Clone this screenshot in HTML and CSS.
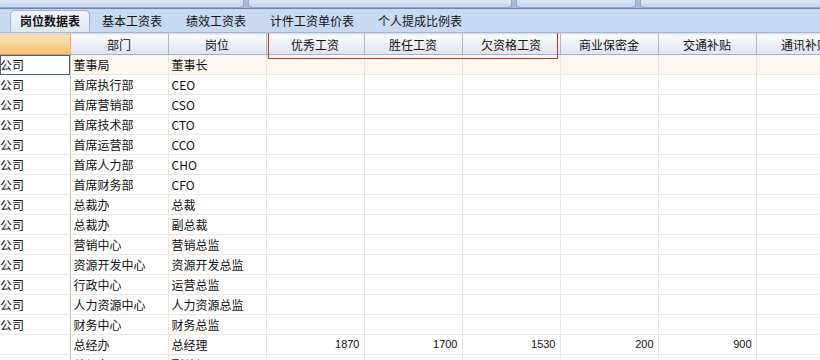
FILE: index.html
```html
<!DOCTYPE html>
<html lang="zh-CN">
<head>
  <meta charset="UTF-8" />
  <title>岗位数据表</title>
  <link rel="stylesheet" href="styles.css">
</head>
<body>
  <div class="topbar">
    <div class="topbtn w1"></div>
    <div class="topbtn w2"></div>
    <div class="topbtn w3"></div>
    <div class="topbtn w4"></div>
  </div>

  <div class="tabbar">
    <div class="tab active">岗位数据表</div>
    <div class="tab">基本工资表</div>
    <div class="tab">绩效工资表</div>
    <div class="tab">计件工资单价表</div>
    <div class="tab">个人提成比例表</div>
  </div>

  <div class="sheet">
    <table class="grid">
      <colgroup>
        <col class="c0"><col class="cw"><col class="cw"><col class="cw"><col class="cw">
        <col class="cw"><col class="cw"><col class="cw"><col class="cw">
      </colgroup>
      <thead>
        <tr>
          <th class="corner"></th>
          <th>部门</th><th>岗位</th><th>优秀工资</th><th>胜任工资</th>
          <th>欠资格工资</th><th>商业保密金</th><th>交通补贴</th><th>通讯补贴</th>
        </tr>
      </thead>
      <tbody id="rows"></tbody>
    </table>
    <div class="mark"></div>
  </div>

  <script>
    const rows = [
      ["公司", "董事局", "董事长"],
      ["公司", "首席执行部", "CEO"],
      ["公司", "首席营销部", "CSO"],
      ["公司", "首席技术部", "CTO"],
      ["公司", "首席运营部", "CCO"],
      ["公司", "首席人力部", "CHO"],
      ["公司", "首席财务部", "CFO"],
      ["公司", "总裁办", "总裁"],
      ["公司", "总裁办", "副总裁"],
      ["公司", "营销中心", "营销总监"],
      ["公司", "资源开发中心", "资源开发总监"],
      ["公司", "行政中心", "运营总监"],
      ["公司", "人力资源中心", "人力资源总监"],
      ["公司", "财务中心", "财务总监"],
      ["", "总经办", "总经理", "1870", "1700", "1530", "200", "900"],
      ["", "总经办", "副总经理"]
    ];

    let html = "";
    rows.forEach((r, i) => {
      html += `<tr class="${i === 0 ? "current" : ""}">`;
      for (let c = 0; c < 9; c++) {
        const v = r[c] || "";
        const cls = c === 0 ? "lead" : (c > 2 ? "num" : "");
        html += `<td class="${cls}">${v}</td>`;
      }
      html += "</tr>";
    });
    document.getElementById("rows").innerHTML = html;
  </script>
</body>
</html>
```

FILE: styles.css
```css
body {
  margin: 0;
  width: 820px;
  height: 360px;
  overflow: hidden;
  font-family: "Noto Sans CJK SC", sans-serif;
  font-size: 12px;
  color: #111;
  background: #fff;
}

.topbar {
  display: flex;
  gap: 4px;
  height: 8px;
  background: #a9bad4;
  border-bottom: 1px solid #6f84a8;
  overflow: hidden;
}

.topbtn {
  height: 7px;
  background: linear-gradient(#dbe6f5, #c6d6ee);
  border: 1px solid #93a8ca;
  border-top: none;
  border-radius: 0 0 4px 4px;
}

.w1 { width: 244px; margin-left: -2px; }
.w2 { width: 262px; }
.w3 { width: 118px; }
.w4 { flex: 1; margin-right: -2px; }

.tabbar {
  display: flex;
  align-items: flex-end;
  height: 23px;
  padding-left: 10px;
  background: #c8d9f2;
  border-bottom: 1px solid #a4b6d2;
}

.tab {
  height: 21px;
  line-height: 20px;
  padding: 0 12px;
}

.tab.active {
  padding: 0 9px;
  font-weight: bold;
  background: linear-gradient(#f1f5fb, #dde7f5);
  border: 1px solid #9db0cf;
  border-bottom: none;
  border-radius: 5px 5px 0 0;
}

.sheet {
  position: relative;
  overflow: hidden;
}

.grid {
  table-layout: fixed;
  width: 854px;
  border-collapse: collapse;
}

.c0 { width: 70px; }
.cw { width: 98px; }

th {
  height: 20px;
  padding: 0;
  font-weight: normal;
  line-height: 19px;
  text-align: center;
  background: linear-gradient(#fbfcfe, #dfe5ef);
  border-right: 1px solid #aab8cc;
  border-bottom: 1px solid #9fb0c9;
  border-top: 1px solid #d6deea;
}

th.corner {
  background: linear-gradient(#fce4bb, #f6bf6f);
  border-bottom: 1px solid #e2a04a;
  border-right: 1px solid #e8b56c;
}

td {
  height: 19px;
  padding: 0 0 0 3px;
  line-height: 19px;
  white-space: nowrap;
  overflow: hidden;
  border-right: 1px solid #e9e6dc;
  border-bottom: 1px solid #ebe8de;
}

td.lead {
  padding-left: 0;
  border-right-color: #c9c7bf;
}

td.num {
  text-align: right;
  padding: 0 4px 0 0;
  font-family: "Liberation Sans", sans-serif;
  font-size: 11px;
}

tr.current td {
  background: #fef8ee;
}

tr.current td.lead {
  background: #fff;
  outline: 1px solid #40608e;
  outline-offset: -1px;
}

.mark {
  position: absolute;
  left: 268px;
  top: -1px;
  width: 288px;
  height: 25px;
  border: 1px solid #d02a32;
}
```
